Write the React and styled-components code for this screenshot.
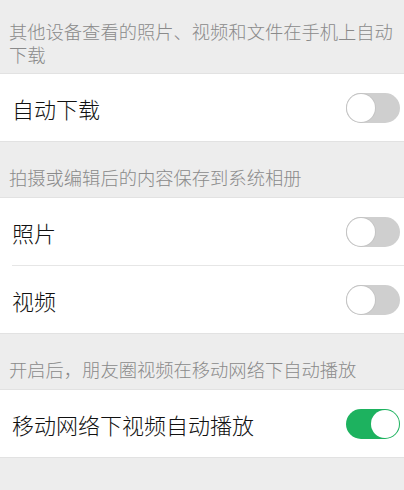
import styled, { createGlobalStyle } from "styled-components";

const GlobalStyle = createGlobalStyle`
  html, body {
    margin: 0;
    padding: 0;
    background: #ededed;
  }
  body {
    font-family: "Noto Sans CJK SC", "Noto Sans", sans-serif;
  }
`;

const sections = [
  {
    title: "其他设备查看的照片、视频和文件在手机上自动下载",
    pad: "20px 9px 7px",
    rows: [{ label: "自动下载", on: false }],
  },
  {
    title: "拍摄或编辑后的内容保存到系统相册",
    pad: "24px 9px 8px",
    rows: [
      { label: "照片", on: false },
      { label: "视频", on: false },
    ],
  },
  {
    title: "开启后，朋友圈视频在移动网络下自动播放",
    pad: "24px 9px 8px",
    rows: [{ label: "移动网络下视频自动播放", on: true }],
  },
];

const App = () => {
  return (
    <Page>
      <GlobalStyle />
      {sections.map((sec, i) => (
        <div key={i}>
          <Title $pad={sec.pad}>{sec.title}</Title>
          <Group>
            {sec.rows.map((row, j) => (
              <Row key={j}>
                <Label>{row.label}</Label>
                <Switch $on={row.on}>
                  <Knob $on={row.on} />
                </Switch>
              </Row>
            ))}
          </Group>
        </div>
      ))}
    </Page>
  );
};
export default App;

const Page = styled.div`
  width: 404px;
  min-height: 490px;
  background: #ededed;
`;

const Title = styled.div`
  padding: ${(p) => p.$pad};
  font-size: 18.3px;
  font-weight: 300;
  line-height: 23px;
  color: #8a8a8a;
`;

const Group = styled.div`
  background: #fff;
  border-top: 1px solid #e2e2e2;
  border-bottom: 1px solid #e2e2e2;
`;

const Row = styled.div`
  display: flex;
  align-items: center;
  justify-content: space-between;
  height: 67px;
  margin-left: 12px;
  padding-right: 4px;
  & + & {
    border-top: 1px solid #e6e6e6;
  }
`;

const Label = styled.div`
  font-size: 22px;
  font-weight: 300;
  color: #111;
  line-height: 30px;
`;

const Switch = styled.div`
  position: relative;
  width: 54px;
  height: 30px;
  border-radius: 15px;
  background: ${(p) => (p.$on ? "#1db25f" : "#cfcfcf")};
`;

const Knob = styled.div`
  position: absolute;
  top: 1px;
  left: ${(p) => (p.$on ? "25px" : "1px")};
  width: 28px;
  height: 28px;
  border-radius: 50%;
  background: #fff;
  box-shadow: ${(p) => (p.$on ? "none" : "0 0 0 1px #c4c4c4")};
`;
